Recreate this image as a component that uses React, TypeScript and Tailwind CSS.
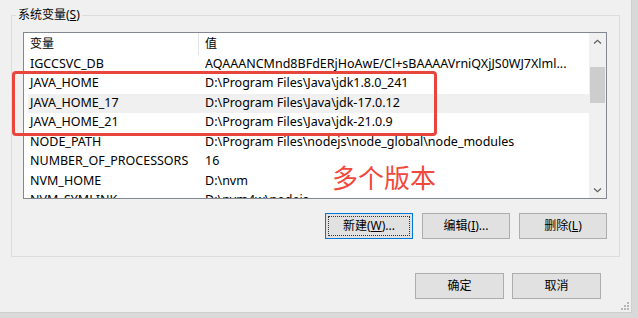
import React from "react";

const rows: [string, string][] = [
  ["IGCCSVC_DB", "AQAAANCMnd8BFdERjHoAwE/Cl+sBAAAAVrniQXjJS0WJ7Xlml"],
  ["JAVA_HOME", "D:\\Program Files\\Java\\jdk1.8.0_241"],
  ["JAVA_HOME_17", "D:\\Program Files\\Java\\jdk-17.0.12"],
  ["JAVA_HOME_21", "D:\\Program Files\\Java\\jdk-21.0.9"],
  ["NODE_PATH", "D:\\Program Files\\nodejs\\node_global\\node_modules"],
  ["NUMBER_OF_PROCESSORS", "16"],
  ["NVM_HOME", "D:\\nvm"],
  ["NVM_SYMLINK", "D:\\nvm4w\\nodejs"],
];

const Chevron = ({ down }: { down?: boolean }) => (
  <svg width="9" height="6" viewBox="0 0 9 6">
    <path
      d={down ? "M1 1.5 L4.5 4.8 L8 1.5" : "M1 4.5 L4.5 1.2 L8 4.5"}
      fill="none"
      stroke="#606060"
      strokeWidth="1.2"
    />
  </svg>
);

const Btn = ({
  children,
  focus,
  w = "w-[88px]",
}: {
  children: React.ReactNode;
  focus?: boolean;
  w?: string;
}) => (
  <div
    className={`${w} h-[26px] bg-[#e1e1e1] border ${
      focus ? "border-[#0078d7] p-[2px]" : "border-[#adadad] p-[2px]"
    } flex`}
  >
    <div
      className={`flex-1 flex items-center justify-center text-[12px] text-black ${
        focus ? "border border-dotted border-[#333]" : ""
      }`}
    >
      {children}
    </div>
  </div>
);

export default function App() {
  return (
    <div
      className="w-[638px] h-[318px] bg-[#d9d9d9] relative overflow-hidden"
      style={{ fontFamily: '"Noto Sans", "Noto Sans CJK SC", sans-serif' }}
    >
      <div className="w-[632px] h-[313px] bg-[#f0f0f0] flex flex-col relative border-r border-b border-[#cfcfcf]">
        <div className="relative ml-[11px] mt-[15px] w-[609px] h-[242px] border border-[#dcdcdc] flex flex-col pl-[11px] pt-[16px]">
          <div className="absolute left-[4px] top-[-9px] px-[2px] bg-[#f0f0f0] text-[12px] leading-[16px] text-black">
            系统变量(<span className="underline">S</span>)
          </div>

          <div className="w-[584px] h-[167px] border border-[#828790] bg-white flex overflow-hidden">
            <div className="flex-1 min-w-0 flex flex-col text-[12.5px] text-black">
              <div className="h-[21.5px] shrink-0 flex items-center text-[12px]">
                <div className="w-[175px] h-full pl-[6px] flex items-center border-r border-[#e5e5e5]">变量</div>
                <div className="pl-[6px]">值</div>
              </div>
              {rows.map(([k, v], i) => (
                <div
                  key={k}
                  className={`h-[19.5px] shrink-0 ml-[4px] flex items-center ${
                    k === "JAVA_HOME_17" ? "bg-[#f0f0f0]" : ""
                  }`}
                >
                  <div className="w-[171px] pl-[2px] whitespace-nowrap">{k}</div>
                  <div className="flex-1 min-w-0 pl-[6px] pr-[10px] whitespace-nowrap overflow-hidden">
                    {v}
                    {i === 0 ? "..." : ""}
                  </div>
                </div>
              ))}
            </div>
            <div className="w-[17px] shrink-0 bg-[#f0f0f0] flex flex-col">
              <div className="h-[17px] flex items-center justify-center">
                <Chevron />
              </div>
              <div className="flex-1 flex flex-col">
                <div className="mt-[17px] mx-[1px] h-[36px] bg-[#cdcdcd]" />
              </div>
              <div className="h-[17px] flex items-center justify-center">
                <Chevron down />
              </div>
            </div>
          </div>

          <div className="mt-[14px] flex justify-end gap-[9px] pr-[12px]">
            <Btn focus>
              新建(<span className="underline">W</span>)...
            </Btn>
            <Btn>
              编辑(<span className="underline">I</span>)...
            </Btn>
            <Btn>
              删除(<span className="underline">L</span>)
            </Btn>
          </div>
        </div>

        <div className="mt-[16px] flex justify-end gap-[8px] pr-[30px]">
          <Btn w="w-[89px]">确定</Btn>
          <Btn w="w-[89px]">取消</Btn>
        </div>

        <svg className="absolute right-[2px] bottom-[2px]" width="10" height="10" viewBox="0 0 10 10">
          {[
            [8, 2],
            [5, 5],
            [8, 5],
            [2, 8],
            [5, 8],
            [8, 8],
          ].map(([x, y]) => (
            <rect key={`${x}-${y}`} x={x} y={y} width="2" height="2" fill="#b5b5b5" />
          ))}
        </svg>
      </div>

      <div className="absolute left-[12px] top-[71px] w-[425px] h-[65px] border-[3px] border-[#e8453c] rounded-[4px]" />
      <div
        className="absolute left-[332px] top-[164px] text-[26px] leading-[26px] text-[#f1483c]"
        style={{ fontFamily: '"Noto Sans CJK SC", sans-serif' }}
      >
        多个版本
      </div>
    </div>
  );
}
